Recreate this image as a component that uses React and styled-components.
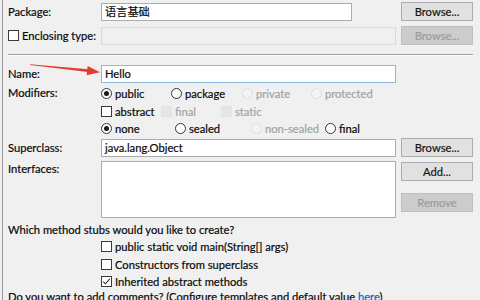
import React from 'react'
import styled, { createGlobalStyle } from 'styled-components'

const GlobalStyle = createGlobalStyle`
  html, body {
    margin: 0;
    padding: 0;
    background: #f0f0f0;
  }
  body {
    font-family: Lato, "Noto Sans CJK SC", sans-serif;
    font-size: 11.2px;
    color: #0a0a0a;
    -webkit-text-stroke: 0.2px;
  }
`

const Frame = styled.div`
  position: relative;
  width: 480px;
  height: 300px;
  overflow: hidden;
`

const Content = styled.div`
  height: 300px;
  margin-left: 2px;
  border-left: 1px solid #9a9a9a;
  padding-left: 5px;
  display: flex;
  flex-direction: column;
`

const Row = styled.div`
  display: grid;
  grid-template-columns: 88px 295px 72px;
  column-gap: 5px;
  align-items: ${p => p.$align || 'center'};
  height: ${p => p.$h || 19}px;
  margin-top: ${p => p.$mt || 0}px;
`

const Label = styled.div`
  display: flex;
  align-items: center;
  gap: 3px;
  line-height: ${p => p.$lh || 16}px;
  white-space: nowrap;
`

const Field = styled.div`
  box-sizing: border-box;
  width: ${p => p.$w || 295}px;
  height: ${p => p.$h || 18}px;
  border: 1px solid ${p => (p.$focus ? '#8ab8e0' : p.$disabled ? '#d9d9d9' : '#adadad')};
  background: ${p => (p.$disabled ? '#f0f0f0' : '#fff')};
  padding: 0 3px;
  line-height: 16px;
  color: #0a0a0a;
  white-space: nowrap;
`

const Button = styled.div`
  box-sizing: border-box;
  width: 72px;
  height: 19px;
  margin-top: ${p => p.$mt || 0}px;
  border: 1px solid ${p => (p.$disabled ? '#bfbfbf' : '#adadad')};
  background: ${p => (p.$disabled ? '#cccccc' : '#e1e1e1')};
  color: ${p => (p.$disabled ? '#9c9c9c' : '#151515')};
  text-align: center;
  line-height: 17px;
`

const ButtonColumn = styled.div`
  display: flex;
  flex-direction: column;
`

const Separator = styled.div`
  width: 465px;
  margin-top: 9px;
  border-top: 1px solid #a0a0a0;
  border-bottom: 1px solid #ffffff;
`

const Options = styled.div`
  grid-column: 2 / 4;
  display: flex;
  flex-direction: column;
`

const OptionRow = styled.div`
  display: flex;
  align-items: center;
  height: ${p => p.$h || 18}px;
`

const Option = styled.div`
  display: flex;
  align-items: center;
  gap: 3px;
  width: ${p => (p.$w ? `${p.$w}px` : 'auto')};
  color: ${p => (p.$disabled ? '#a3a3a3' : '#0a0a0a')};
  white-space: nowrap;
`

const Radio = styled.span`
  box-sizing: border-box;
  width: 11px;
  height: 11px;
  border-radius: 50%;
  border: 1px solid ${p => (p.$disabled ? '#dedede' : '#333')};
  background: ${p => (p.$disabled ? '#f3f3f3' : '#fff')};
  display: flex;
  align-items: center;
  justify-content: center;
  flex-shrink: 0;
  &::after {
    content: '';
    display: ${p => (p.$checked ? 'block' : 'none')};
    width: 5px;
    height: 5px;
    border-radius: 50%;
    background: #1a1a1a;
  }
`

const Box = styled.span`
  box-sizing: border-box;
  width: 11px;
  height: 11px;
  border: 1px solid ${p => (p.$disabled ? '#e2e2e2' : '#3a3a3a')};
  background: ${p => (p.$disabled ? '#e6e6e6' : '#fff')};
  display: flex;
  align-items: center;
  justify-content: center;
  flex-shrink: 0;
`

const Text = styled.div`
  line-height: 16px;
  margin-top: ${p => p.$mt || 0}px;
  white-space: nowrap;
`

const Stubs = styled.div`
  margin-left: 93px;
  display: flex;
  flex-direction: column;
`

const Link = styled.span`
  color: #0a64c8;
`

const Overlay = styled.svg`
  position: absolute;
  left: 0;
  top: 0;
  pointer-events: none;
`

const Check = ({ checked, disabled }) => (
  <Box $disabled={disabled}>
    {checked && (
      <svg width="9" height="9" viewBox="0 0 9 9">
        <path d="M1.2 4.6 L3.4 6.8 L7.8 1.8" fill="none" stroke="#333" strokeWidth="1.1" />
      </svg>
    )}
  </Box>
)

const RadioOption = ({ w, checked, disabled, children }) => (
  <Option $w={w} $disabled={disabled}>
    <Radio $checked={checked} $disabled={disabled} />
    {children}
  </Option>
)

const CheckOption = ({ w, checked, disabled, children }) => (
  <Option $w={w} $disabled={disabled}>
    <Check checked={checked} disabled={disabled} />
    {children}
  </Option>
)

const App = () => {
  return (
    <>
      <GlobalStyle />
      <Frame>
        <Content>
          <Row $mt={2}>
            <Label>Package:</Label>
            <Field $w={251}>语言基础</Field>
            <Button>Browse...</Button>
          </Row>
          <Row $mt={5}>
            <Label>
              <Check />
              Enclosing type:
            </Label>
            <Field $disabled />
            <Button $disabled>Browse...</Button>
          </Row>
          <Separator />
          <Row $mt={9}>
            <Label>Name:</Label>
            <Field $focus>Hello</Field>
          </Row>
          <Row $mt={1} $h={53} $align="start">
            <Label $lh={18}>Modifiers:</Label>
            <Options>
              <OptionRow>
                <RadioOption w={70} checked>public</RadioOption>
                <RadioOption w={71}>package</RadioOption>
                <RadioOption w={69} disabled>private</RadioOption>
                <RadioOption disabled>protected</RadioOption>
              </OptionRow>
              <OptionRow>
                <CheckOption w={60}>abstract</CheckOption>
                <CheckOption w={60} disabled>final</CheckOption>
                <CheckOption disabled>static</CheckOption>
              </OptionRow>
              <OptionRow $h={17}>
                <RadioOption w={74} checked>none</RadioOption>
                <RadioOption w={76}>sealed</RadioOption>
                <RadioOption w={74} disabled>non-sealed</RadioOption>
                <RadioOption>final</RadioOption>
              </OptionRow>
            </Options>
          </Row>
          <Row $mt={1}>
            <Label>Superclass:</Label>
            <Field>java.lang.Object</Field>
            <Button>Browse...</Button>
          </Row>
          <Row $mt={4} $h={57} $align="start">
            <Label>Interfaces:</Label>
            <Field $h={57} />
            <ButtonColumn>
              <Button $mt={1}>Add...</Button>
              <Button $mt={12} $disabled>Remove</Button>
            </ButtonColumn>
          </Row>
          <Text $mt={4}>Which method stubs would you like to create?</Text>
          <Stubs>
            <OptionRow $h={17}>
              <CheckOption>public static void main(String[] args)</CheckOption>
            </OptionRow>
            <OptionRow $h={18}>
              <CheckOption>Constructors from superclass</CheckOption>
            </OptionRow>
            <OptionRow $h={17}>
              <CheckOption checked>Inherited abstract methods</CheckOption>
            </OptionRow>
          </Stubs>
          <Text $mt={-1}>
            Do you want to add comments? (Configure templates and default value <Link>here</Link>)
          </Text>
        </Content>
        <Overlay width="480" height="300" viewBox="0 0 480 300">
          <polygon points="30,64.3 30,64.9 87.8,71.9 88.2,69.3" fill="#e53a2f" />
          <polygon points="100,72.2 87.6,66 86.6,75.2" fill="#e53a2f" />
        </Overlay>
      </Frame>
    </>
  )
}

export default App
